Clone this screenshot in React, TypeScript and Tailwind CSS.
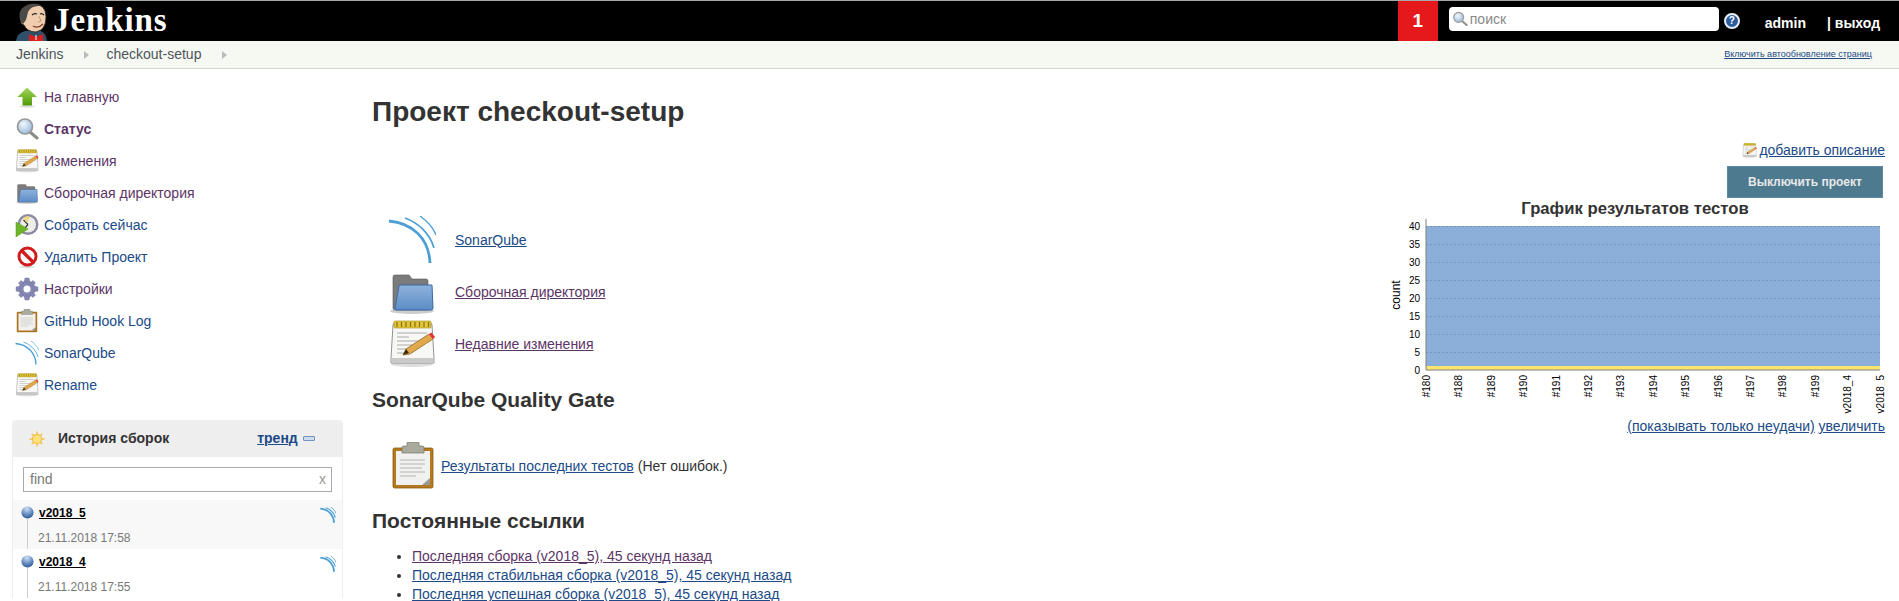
import { useId } from "react";

const FONT = "font-['Liberation_Sans',Arial,sans-serif]";
const LINK = "text-[#204a87]";
const VISITED = "text-[#5c3566]";

function SonarIcon({ className, thick = 1 }: { className?: string; thick?: number }) {
  return (
    <svg viewBox="0 0 48 48" fill="none" stroke="#4b9fd5" className={className}>
      <path d="M1 5 C24 7 41 22 42 47" strokeWidth={2.8 * thick} />
      <path d="M17 2 C31 7 42 18 46 32" strokeWidth={1.7 * thick} />
      <path d="M32 0 C39 5 45 11 48 19" strokeWidth={1.3 * thick} />
    </svg>
  );
}

function FolderIcon({ className }: { className?: string }) {
  const id = useId();
  return (
    <svg viewBox="0 0 48 48" className={className}>
      <defs>
        <linearGradient id={id} x1="0" y1="0" x2="0" y2="1">
          <stop offset="0" stopColor="#8fb2dc" />
          <stop offset="1" stopColor="#5c8cc6" />
        </linearGradient>
      </defs>
      <ellipse cx="24" cy="43" rx="22" ry="3" fill="#ccc" />
      <path d="M5 9 Q5 7 7 7 H21 L24 11 H38 Q40 11 40 13 V42 H7 Q5 42 5 40 Z" fill="#7b7b7b" stroke="#555" strokeWidth="0.6" />
      <path d="M11 18 Q11 17 12 17 H44 L45 40 Q45 42 43 42 H8 Q7 42 7 40 Z" fill={`url(#${id})`} stroke="#3a68a4" strokeWidth="1" />
    </svg>
  );
}

function NotepadIcon({ className }: { className?: string }) {
  return (
    <svg viewBox="0 0 48 48" className={className}>
      <ellipse cx="24" cy="44" rx="21" ry="3" fill="#ddd" />
      <path d="M7 3 H42 Q44 3 44 5 L46 38 V43 H3 V38 L5 5 Q5 3 7 3 Z" fill="#f7f7f5" stroke="#777" strokeWidth="0.8" />
      <rect x="3.5" y="38" width="42" height="5" fill="#c9c9c7" />
      <rect x="6" y="1" width="37" height="7" rx="1" fill="#e2c640" stroke="#a08a10" strokeWidth="0.6" />
      <g stroke="#8a7300" strokeWidth="1.2">
        <path d="M9 2 V7 M13.5 2 V7 M18 2 V7 M22.5 2 V7 M27 2 V7 M31.5 2 V7 M36 2 V7 M40.5 2 V7" />
      </g>
      <g stroke="#aaa" strokeWidth="1">
        <path d="M9 13 H39 M9 17 H21 M9 21 H32 M9 25 H28 M9 29 H22 M9 33 H20" />
      </g>
      <path d="M15 35 L18 29 L41 14 L45 19 L22 34 Z" fill="#e2a94a" stroke="#8a5b1c" strokeWidth="0.7" />
      <path d="M41 14 L45 19 L47 17 L43.5 12.5 Z" fill="#e8313a" />
      <path d="M15 35 L18 29 L21 33 Z" fill="#3a2a14" />
    </svg>
  );
}

function ClipboardIcon({ className }: { className?: string }) {
  return (
    <svg viewBox="0 0 48 48" className={className}>
      <rect x="4" y="6" width="40" height="40" rx="1.5" fill="#b5791f" stroke="#8a5a12" strokeWidth="0.8" />
      <path d="M7 9 H41 V37 L36 43 H7 Z" fill="#f1f1ef" />
      <path d="M33 43 L41 36 V43 Z" fill="#999" />
      <g stroke="#c8c8c6" strokeWidth="1.5">
        <path d="M11 18 H36 M11 22 H36 M11 26 H33 M11 30 H36 M11 34 H27" />
      </g>
      <path d="M13 5 Q13 4 15 4 H18 V1 Q18 0 19 0 H29 Q30 0 30 1 V4 H33 Q35 4 35 5 V11 H13 Z" fill="#a9a99c" stroke="#77776c" strokeWidth="0.7" />
    </svg>
  );
}

function HomeIcon() {
  const id = useId();
  return (
    <svg viewBox="0 0 24 24" className="h-6 w-6">
      <defs>
        <linearGradient id={id} x1="0" y1="0" x2="0" y2="1">
          <stop offset="0" stopColor="#a4d65e" />
          <stop offset="1" stopColor="#4e9a06" />
        </linearGradient>
      </defs>
      <ellipse cx="12" cy="21.5" rx="8" ry="1.2" fill="#ddd" />
      <path d="M12 2.5 L22 12 H17 V20.5 H7.5 V12 H2.5 Z" fill={`url(#${id})`} />
    </svg>
  );
}

function SearchIcon({ className }: { className?: string }) {
  const id = useId();
  return (
    <svg viewBox="0 0 24 24" className={className}>
      <defs>
        <radialGradient id={id} cx="0.4" cy="0.35" r="0.7">
          <stop offset="0" stopColor="#f4f8fc" />
          <stop offset="1" stopColor="#93b7dd" />
        </radialGradient>
      </defs>
      <path d="M15 15 L22 21" stroke="#8c8c86" strokeWidth="3" strokeLinecap="round" />
      <circle cx="10" cy="9.5" r="7.5" fill={`url(#${id})`} stroke="#9a9a96" strokeWidth="1.7" />
    </svg>
  );
}

function ClockIcon() {
  return (
    <svg viewBox="0 0 24 24" className="h-6 w-6">
      <circle cx="13" cy="11.5" r="10.5" fill="#8b8aa2" />
      <circle cx="13" cy="11.5" r="8" fill="#eeeee8" />
      <path d="M13 11.5 L8.5 7 M13 11.5 L10 15" stroke="#333" strokeWidth="1.2" />
      <path d="M8 5 Q12 2 15 4 L12 10 Z" fill="#f0d882" />
      <path d="M1 9 L13 16 L1 24 Z" fill="#6fb52c" stroke="#4e9a06" strokeWidth="0.5" />
    </svg>
  );
}

function DeleteIcon() {
  return (
    <svg viewBox="0 0 24 24" className="h-6 w-6">
      <ellipse cx="12" cy="22" rx="8" ry="1.2" fill="#ddd" />
      <circle cx="12.5" cy="11.5" r="8.5" fill="#fff" stroke="#d01c1c" strokeWidth="3" />
      <path d="M6.5 5.5 L18.5 17.5" stroke="#d01c1c" strokeWidth="3.4" />
    </svg>
  );
}

function GearIcon() {
  return (
    <svg viewBox="0 0 24 24" className="h-6 w-6">
      <g fill="#8587b4" stroke="#6f7099" strokeWidth="0.4">
        <circle cx="12" cy="12" r="8" />
        <path d="M10 1 H14 L15 5 H9 Z" />
        <path d="M10 23 H14 L15 19 H9 Z" />
        <path d="M1 10 V14 L5 15 V9 Z" />
        <path d="M23 10 V14 L19 15 V9 Z" />
        <path d="M3.5 6 L6 3.5 L9 6 L6 9 Z" />
        <path d="M20.5 6 L18 3.5 L15 6 L18 9 Z" />
        <path d="M3.5 18 L6 20.5 L9 18 L6 15 Z" />
        <path d="M20.5 18 L18 20.5 L15 18 L18 15 Z" />
      </g>
      <circle cx="12" cy="12" r="3.5" fill="#fff" />
    </svg>
  );
}

function BlueBall() {
  const id = useId();
  return (
    <svg viewBox="0 0 16 16" className="h-[13px] w-[13px] shrink-0">
      <defs>
        <radialGradient id={id} cx="0.45" cy="0.2" r="0.8">
          <stop offset="0" stopColor="#cfe0f2" />
          <stop offset="0.55" stopColor="#6e93c4" />
          <stop offset="1" stopColor="#2d5a96" />
        </radialGradient>
      </defs>
      <circle cx="8" cy="8" r="7.5" fill={`url(#${id})`} />
    </svg>
  );
}

function SunIcon() {
  return (
    <svg viewBox="0 0 16 16" className="h-4 w-4">
      <g stroke="#f5c04a" strokeWidth="1.4">
        <path d="M8 0.5 V15.5 M0.5 8 H15.5 M2.7 2.7 L13.3 13.3 M13.3 2.7 L2.7 13.3" />
      </g>
      <circle cx="8" cy="8" r="4.6" fill="#fbe27c" stroke="#f1b93c" />
    </svg>
  );
}

// butler head, drawn small: jacket, bow tie, bald head with side hair
function JenkinsHead() {
  return (
    <svg viewBox="0 0 32 40" className="h-10 w-8 shrink-0">
      <path d="M0 40 Q1 32 9 30 H25 Q30 32 31 40 Z" fill="#2f5068" />
      <path d="M13 33 L20 36 L27 33 V40 H13 Z" fill="#d8201f" />
      <path d="M20 34 L20 39" stroke="#fff" strokeWidth="1" />
      <path d="M5 17 Q4 4 17 3 Q30 3 30 16 Q30 29 20 31 Q11 31 8 24 Q4 23 5 17 Z" fill="#f1cdb0" stroke="#2a2320" strokeWidth="0.8" />
      <path d="M4 19 Q1 6 15 3 Q22 2 25 5 Q15 4 12 11 L10 19 L7 23 Z" fill="#4c4a48" />
      <path d="M16 14 Q18 12 21 13 M24 13 Q26 12 28 14" stroke="#222" strokeWidth="1.2" fill="none" />
      <path d="M17 25 Q22 28 27 23" stroke="#7a3f2a" strokeWidth="1.1" fill="none" />
      <path d="M23 15 L25 20 L22 21" stroke="#b98a6a" strokeWidth="0.8" fill="none" />
    </svg>
  );
}

function Header() {
  return (
    <header className="flex h-[41px] items-stretch border-t border-[#a8a8a8] bg-black pl-4">
      <JenkinsHead />
      <div className="ml-[5px] font-['Liberation_Serif',serif] text-[33px] leading-[38px] font-bold tracking-[0.9px] text-white">Jenkins</div>
      <div className="ml-auto flex items-stretch">
        <div className="flex w-10 items-center justify-center bg-[#e5191c] text-[19px] font-bold text-white">1</div>
        <div className="mt-[6px] ml-[11px] flex h-6 w-[270px] items-center gap-[2px] rounded-[4px] bg-white pl-[3px] text-[14px] text-[#888]">
          <SearchIcon className="h-4 w-4" />
          <span>поиск</span>
        </div>
        <div className="mt-[12px] ml-[5px] flex h-4 w-4 items-center justify-center rounded-full border-2 border-[#e8eef6] bg-[#2e5d9e] text-[10px] leading-none font-bold text-white">?</div>
        <div className="mt-[13px] ml-[25px] text-[14px] leading-[18px] font-bold text-white">admin</div>
        <div className="mt-[13px] ml-[21px] w-[72px] text-[14px] leading-[18px] font-bold text-white">| выход</div>
      </div>
    </header>
  );
}

function Breadcrumbs() {
  return (
    <nav className="flex h-[28px] items-center border-b border-[#d3d7cf] bg-[#f6f8f2] pl-4 text-[14px] text-[#4d545d]">
      <span>Jenkins</span>
      <span className="mr-[17px] ml-[21px] h-0 w-0 border-y-[4px] border-l-[5px] border-y-transparent border-l-[#bbb]" />
      <span>checkout-setup</span>
      <span className="ml-[21px] h-0 w-0 border-y-[4px] border-l-[5px] border-y-transparent border-l-[#bbb]" />
      <span className={`mr-[27px] ml-auto text-[9px] underline ${LINK}`}>Включить автообновление страниц</span>
    </nav>
  );
}

const TASKS = [
  { label: "На главную", color: VISITED, icon: <HomeIcon /> },
  { label: "Статус", color: VISITED, bold: true, icon: <SearchIcon className="h-6 w-6" /> },
  { label: "Изменения", color: VISITED, icon: <NotepadIcon className="h-6 w-6" /> },
  { label: "Сборочная директория", color: VISITED, icon: <FolderIcon className="h-6 w-6" /> },
  { label: "Собрать сейчас", color: LINK, icon: <ClockIcon /> },
  { label: "Удалить Проект", color: LINK, icon: <DeleteIcon /> },
  { label: "Настройки", color: VISITED, icon: <GearIcon /> },
  { label: "GitHub Hook Log", color: LINK, icon: <ClipboardIcon className="h-6 w-6" /> },
  { label: "SonarQube", color: LINK, icon: <SonarIcon className="h-6 w-6" /> },
  { label: "Rename", color: LINK, icon: <NotepadIcon className="h-6 w-6" /> },
];

const BUILDS = [
  { name: "v2018_5", date: "21.11.2018 17:58", bg: "bg-[#f8f8f8]" },
  { name: "v2018_4", date: "21.11.2018 17:55", bg: "bg-white" },
];

function BuildHistory() {
  return (
    <section className="ml-3 w-[331px] rounded-t-[4px] border-x border-[#eee]">
      <div className="flex h-[37px] items-center rounded-t-[4px] bg-[#eeeeee] pl-4 text-[14px] font-bold text-[#333]">
        <SunIcon />
        <span className="ml-[13px]">История сборок</span>
        <span className={`ml-[88px] underline ${LINK}`}>тренд</span>
        <span className="ml-[5px] h-[5px] w-3 rounded-[1px] border border-[#6f94c4] bg-[#cfdcec]" />
      </div>
      <div className="px-[10px] pt-[10px] pb-2">
        <div className="flex h-[25px] items-center justify-between border border-[#aaa] bg-white pr-[5px] pl-[6px] text-[14px] text-[#777]">
          <span>find</span>
          <span className="text-[#999]">x</span>
        </div>
      </div>
      {BUILDS.map((b) => (
        <div key={b.name} className={`relative h-[49px] ${b.bg}`}>
          <div className="absolute top-[6px] left-[8px] flex h-[43px] flex-col items-center">
            <BlueBall />
            <div className="w-px flex-1 bg-[#ccc]" />
          </div>
          <div className="pt-[5px] pl-[26px]">
            <div className="text-[12px] leading-[16px] font-bold text-black underline">{b.name}</div>
            <div className="mt-[9px] -ml-[1px] text-[12px] leading-[16px] text-[#777]">{b.date}</div>
          </div>
          <SonarIcon thick={2} className="absolute top-[7px] right-[6px] h-4 w-4" />
        </div>
      ))}
    </section>
  );
}

function Sidebar() {
  return (
    <aside className="w-[360px] shrink-0 pt-3">
      <ul>
        {TASKS.map((t) => (
          <li key={t.label} className="flex h-8 items-center">
            <div className="ml-[15px] flex w-[29px] shrink-0 items-center">{t.icon}</div>
            <span className={`text-[14px] ${t.color} ${t.bold ? "font-bold" : ""}`}>{t.label}</span>
          </li>
        ))}
      </ul>
      <div className="mt-[19px]">
        <BuildHistory />
      </div>
    </aside>
  );
}

const LABELS = ["#180", "#188", "#189", "#190", "#191", "#192", "#193", "#194", "#195", "#196", "#197", "#198", "#199", "v2018_4", "v2018_5"];

function TrendChart() {
  const ticks = [40, 35, 30, 25, 20, 15, 10, 5, 0];
  return (
    <svg width="500" height="218" viewBox="0 0 500 218" className="block">
      <rect x="41" y="26" width="454" height="140" fill="#8cafd9" />
      <rect x="41" y="166" width="454" height="4" fill="#fce56e" />
      {ticks.slice(0, 8).map((t, i) => (
        <line key={t} x1="41" x2="495" y1={26.5 + i * 18} y2={26.5 + i * 18} stroke="#7595bd" strokeWidth="1" strokeDasharray="2 2" />
      ))}
      <path d="M41 19 V170 H495" fill="none" stroke="#808080" strokeWidth="1" />
      {ticks.map((t, i) => (
        <text key={t} x="35" y={26 + i * 18 + 4} textAnchor="end" fontSize="10" fontFamily="Liberation Sans" fill="#000">
          {t}
        </text>
      ))}
      <text x="0" y="0" transform="translate(15 95) rotate(-90)" textAnchor="middle" fontSize="12" fontFamily="Liberation Sans" fill="#000">
        count
      </text>
      {LABELS.map((l, i) => (
        <text
          key={l}
          x="0"
          y="0"
          transform={`translate(${45 + i * 32.4} 175) rotate(-90)`}
          textAnchor="end"
          fontSize="10"
          fontFamily="Liberation Sans"
          fill="#000"
        >
          {l}
        </text>
      ))}
      <text x="250" y="14" textAnchor="middle" fontSize="16.7" fontWeight="bold" fontFamily="Liberation Sans" fill="#333">
        График результатов тестов
      </text>
    </svg>
  );
}

function RightColumn() {
  return (
    <div className="flex w-[500px] shrink-0 flex-col items-end pt-[71px]">
      <div className="flex h-[20px] items-center text-[14px]">
        <NotepadIcon className="mr-[2px] h-[15px] w-[15px]" />
        <span className={`underline ${LINK}`}>добавить описание</span>
      </div>
      <div className="mt-[6px] mr-[2px] flex h-[32px] w-[156px] items-center justify-center border border-[#5d8a9e] bg-[#4d7a8f] text-[12px] font-bold text-[#e8e8e8]">Выключить проект</div>
      <div className="mt-[2px]">
        <TrendChart />
      </div>
      <div className="-mt-[2px] text-[14px] leading-[20px]">
        <span className={`underline ${LINK}`}>(показывать только неудачи)</span> <span className={`underline ${LINK}`}>увеличить</span>
      </div>
    </div>
  );
}

function MainLinks() {
  return (
    <div className="mt-[86px] flex flex-col gap-[4px] pl-4">
      <div className="flex h-12 items-center">
        <SonarIcon className="h-12 w-12" />
        <span className={`ml-[19px] text-[14px] underline ${LINK}`}>SonarQube</span>
      </div>
      <div className="flex h-12 items-center">
        <FolderIcon className="h-12 w-12" />
        <span className={`ml-[19px] text-[14px] underline ${VISITED}`}>Сборочная директория</span>
      </div>
      <div className="flex h-12 items-center">
        <NotepadIcon className="h-12 w-12" />
        <span className={`ml-[19px] text-[14px] underline ${VISITED}`}>Недавние изменения</span>
      </div>
    </div>
  );
}

export default function App() {
  return (
    <div className={`h-[601px] w-[1899px] overflow-hidden bg-white text-[#333] ${FONT}`}>
      <Header />
      <Breadcrumbs />
      <div className="flex">
        <Sidebar />
        <main className="flex flex-1 justify-between pr-[14px] pl-3">
          <div>
            <h1 className="mt-[25px] text-[28px] leading-[36px] font-bold">Проект checkout-setup</h1>
            <MainLinks />
            <h2 className="mt-[20px] text-[21px] leading-[24px] font-bold">SonarQube Quality Gate</h2>
            <div className="mt-[30px] flex h-12 items-center pl-[17px]">
              <ClipboardIcon className="h-12 w-12" />
              <span className={`ml-[4px] text-[14px] underline ${LINK}`}>Результаты последних тестов</span>
              <span className="ml-1 text-[14px]">(Нет ошибок.)</span>
            </div>
            <h2 className="mt-[19px] text-[21px] leading-[24px] font-bold">Постоянные ссылки</h2>
            <ul className="mt-[14px] list-disc pl-10 text-[14px] leading-[19px]">
              <li>
                <span className={`underline ${VISITED}`}>Последняя сборка (v2018_5), 45 секунд назад</span>
              </li>
              <li>
                <span className={`underline ${LINK}`}>Последняя стабильная сборка (v2018_5), 45 секунд назад</span>
              </li>
              <li>
                <span className={`underline ${LINK}`}>Последняя успешная сборка (v2018_5), 45 секунд назад</span>
              </li>
            </ul>
          </div>
          <RightColumn />
        </main>
      </div>
    </div>
  );
}
